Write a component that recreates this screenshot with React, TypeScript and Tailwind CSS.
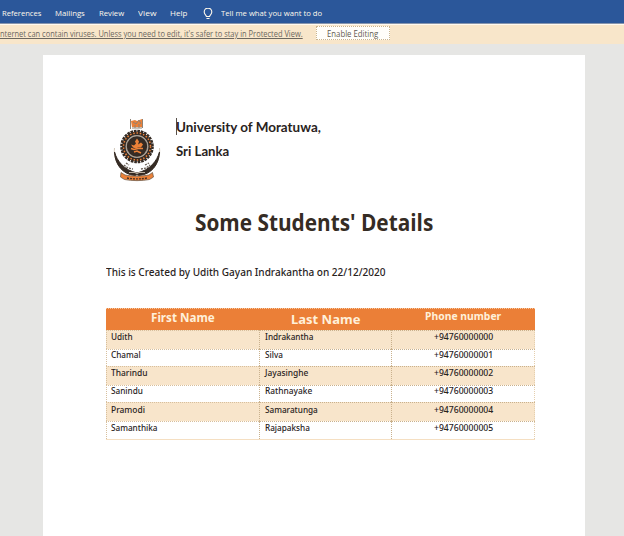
import { useLayoutEffect, useRef } from "react";
import type { ReactNode } from "react";

/** A single line of text stretched or condensed to an exact width. */
function Fit({ width, className = "", inner = "", children }: { width: number; className?: string; inner?: string; children: ReactNode }) {
  const ref = useRef<HTMLSpanElement>(null);
  useLayoutEffect(() => {
    const el = ref.current;
    if (el) el.style.transform = `scaleX(${width / el.offsetWidth})`;
  }, [width]);
  return (
    <span className={`block ${className}`} style={{ width }}>
      <span ref={ref} className={`inline-block origin-left whitespace-nowrap align-top ${inner}`}>
        {children}
      </span>
    </span>
  );
}

const tabs = [
  { label: "References", width: 39, gap: "ml-[2px]" },
  { label: "Mailings", width: 30, gap: "ml-[14px]" },
  { label: "Review", width: 25, gap: "ml-[14px]" },
  { label: "View", width: 18, gap: "ml-[14px]" },
  { label: "Help", width: 17, gap: "ml-[14px]" },
];

const rows = [
  { first: "Udith", fw: 22, last: "Indrakantha", lw: 48, phone: "+94760000000", h: "h-[19px]", shaded: true, top: "mt-px" },
  { first: "Chamal", fw: 30, last: "Silva", lw: 18, phone: "+94760000001", h: "h-[17px]", shaded: false, top: "mt-0" },
  { first: "Tharindu", fw: 36, last: "Jayasinghe", lw: 43, phone: "+94760000002", h: "h-[19px]", shaded: true, top: "mt-px" },
  { first: "Sanindu", fw: 32, last: "Rathnayake", lw: 47, phone: "+94760000003", h: "h-[17px]", shaded: false, top: "mt-0" },
  { first: "Pramodi", fw: 34, last: "Samaratunga", lw: 53, phone: "+94760000004", h: "h-[19px]", shaded: true, top: "mt-[2px]" },
  { first: "Samanthika", fw: 47, last: "Rajapaksha", lw: 45, phone: "+94760000005", h: "h-[18px]", shaded: false, top: "mt-px" },
];

function Crest() {
  return (
    <svg width="50" height="66" viewBox="0 0 50 66" fill="none">
      <path d="M18 4l4-1 2 1 5-2 1 8H19z" fill="#ec8138" />
      <path d="M17.5 2v10M29.5 2v9M20 5l3 2 3-4 2 4M19 11h10M22 8v3M26 7v4" stroke="#8f8375" strokeWidth="1" />
      <path d="M1.5 31C0 45 9 56 24 59 39 56 48 45 46.5 31" stroke="#d3cabc" strokeWidth="1" />
      <path d="M1.5 35C2 48 10 57.5 22 58.5l2-1 2 1C38 57.5 46 48 46.5 35 44 44 37 53 24 56 11 53 4 44 1.5 35z" fill="#352b24" stroke="#352b24" strokeWidth="1" />
      <circle cx="24" cy="29.5" r="15.4" stroke="#352b24" strokeWidth="2.8" strokeDasharray="2.6 0.85" />
      <circle cx="24" cy="29.5" r="13" stroke="#352b24" strokeWidth="3.8" />
      <circle cx="24" cy="29.5" r="13.5" stroke="#ec8138" strokeWidth="1.5" strokeDasharray="1.5 1.8" />
      <circle cx="24" cy="29.5" r="10.8" fill="#352b24" stroke="#aaa196" strokeWidth="1.3" />
      <path d="M24 21.5l2 3-1 3 3-2 2 2-2 3h-3l-2 1-3-1-2-3 3 1 2-2-1-2z" fill="#ec8138" />
      <path d="M18 31.5l3 1 4-1h5M21 35l3-1 4 2" stroke="#ec8138" strokeWidth="1.6" />
      <path d="M11 48l4 3 5 1M28 52l5-1 4-3M13 46l3 2M32 48l4-2" stroke="#6c6258" strokeWidth="1.3" strokeDasharray="2 1" />
      <path d="M16 55.5h6l2 1 2-1h6" stroke="#bcb0a2" strokeWidth="1.2" />
      <path d="M8 55.500l4 2.500c7 1.500 16 1.500 24 0l3.500-2.500 1 4.500-4 2.500c-8 1.500-17 1.500-25 0l-4-2.500z" fill="#ec8138" stroke="#74604d" strokeWidth="0.8" />
      <path d="M14 61c7 1.200 13 1.200 20 0" stroke="#4d3322" strokeWidth="1.4" strokeDasharray="2 1" />
    </svg>
  );
}

export default function App() {
  return (
    <div className="flex h-[536px] w-[624px] flex-col overflow-hidden bg-[#e6e6e4] font-['Noto_Sans',sans-serif] text-[#29231d]">
      <nav className="flex h-[24px] shrink-0 items-start border-b border-[#8795ad] bg-[#2b579a] pt-[8px] font-['Open_Sans',sans-serif] text-[8px] leading-[11px] text-[#fff9ec]">
        {tabs.map((t) => (
          <Fit key={t.label} width={t.width} className={`-mt-px ${t.gap}`}>{t.label}</Fit>
        ))}
        <svg className="ml-[16px]" width="10" height="12" viewBox="0 0 10 12" fill="none" stroke="#fff9ec">
          <path d="M3.4 8.5C3.2 7 1.2 6.2 1.2 3.9a3.8 3.8 0 017.6 0c0 2.3-2 3.1-2.2 4.6zM3.5 10.5h3" strokeWidth="1.1" />
        </svg>
        <Fit width={101} className="-mt-px ml-[8px]">Tell me what you want to do</Fit>
      </nav>

      <div className="flex h-[20px] shrink-0 items-start border-t border-[#fffaf0] bg-[#f8e6ca] font-['Open_Sans',sans-serif] text-[8.4px] leading-[11px]">
        <Fit width={303} className="mt-[3px] text-[#6b675f]" inner="underline underline-offset-1">
          nternet can contain viruses. Unless you need to edit, it's safer to stay in Protected View.
        </Fit>
        <button className="ml-[13px] mt-[1px] flex h-[14px] w-[74px] items-start border border-dotted border-[#c9b48f] bg-[#fffefa] pl-[10px] text-[#5f5a50]">
          <Fit width={51} className="mt-px">Enable Editing</Fit>
        </button>
      </div>

      <main className="ml-[43px] mt-[11px] flex w-[542px] grow flex-col bg-white pl-[63px]">
        <header className="mt-[62px] flex h-[66px] items-start pl-[7px]">
          <Crest />
          <div className="ml-[13px] flex font-['Lato',sans-serif] text-[13.2px] font-bold leading-[16px]">
            <i className="mt-[1px] h-[17px] w-px bg-[#57504a]" />
            <div className="-ml-px flex flex-col gap-[8px] pt-[2px]">
              <Fit width={145}>University of Moratuwa,</Fit>
              <Fit width={53}>Sri Lanka</Fit>
            </div>
          </div>
        </header>

        <h1 className="ml-[89px] mt-[23px] font-['Open_Sans',sans-serif] text-[23.5px] font-bold leading-[32px] text-[#352c24]">
          <Fit width={238}>Some Students' Details</Fit>
        </h1>

        <p className="mt-[26px] text-[10.8px] font-medium leading-[16px]">
          <Fit width={280}>This is Created by Udith Gayan Indrakantha on 22/12/2020</Fit>
        </p>

        <section className="mt-[28px] w-[429px] text-[8.2px] font-medium leading-[10px]">
          <div className="grid h-[22px] grid-cols-[153px_132px_144px] border-t border-dotted border-[#f6caa4] bg-[#eb7f37] font-bold text-[#fff0da]">
            <Fit width={64} className="ml-[45px] mt-px text-[12px] leading-[15px]">First Name</Fit>
            <Fit width={69} className="ml-[32px] mt-[2px] text-[13px] leading-[17px]">Last Name</Fit>
            <Fit width={76} className="ml-[34px] text-[10.5px] leading-[14px]">Phone number</Fit>
          </div>
          {rows.map((r) => (
            <div
              key={r.first}
              className={`grid grid-cols-[153px_132px_144px] border-r border-dotted border-[#e5cfae] ${r.h} ${r.shaded ? "bg-[#f8e5cb]" : "bg-white"}`}
            >
              <div className="border-l border-t border-dotted border-[#d7bf9d] pl-[4px]">
                <Fit width={r.fw} className={r.top}>{r.first}</Fit>
              </div>
              <div className="border-l border-t border-dotted border-[#c9b18d] pl-[5px]">
                <Fit width={r.lw} className={r.top}>{r.last}</Fit>
              </div>
              <div className="border-l border-t border-dotted border-[#c9b18d] pl-[42px]">
                <Fit width={59} className={r.top}>{r.phone}</Fit>
              </div>
            </div>
          ))}
          <div className="h-px bg-[#f5dfc2]" />
        </section>
      </main>
    </div>
  );
}
